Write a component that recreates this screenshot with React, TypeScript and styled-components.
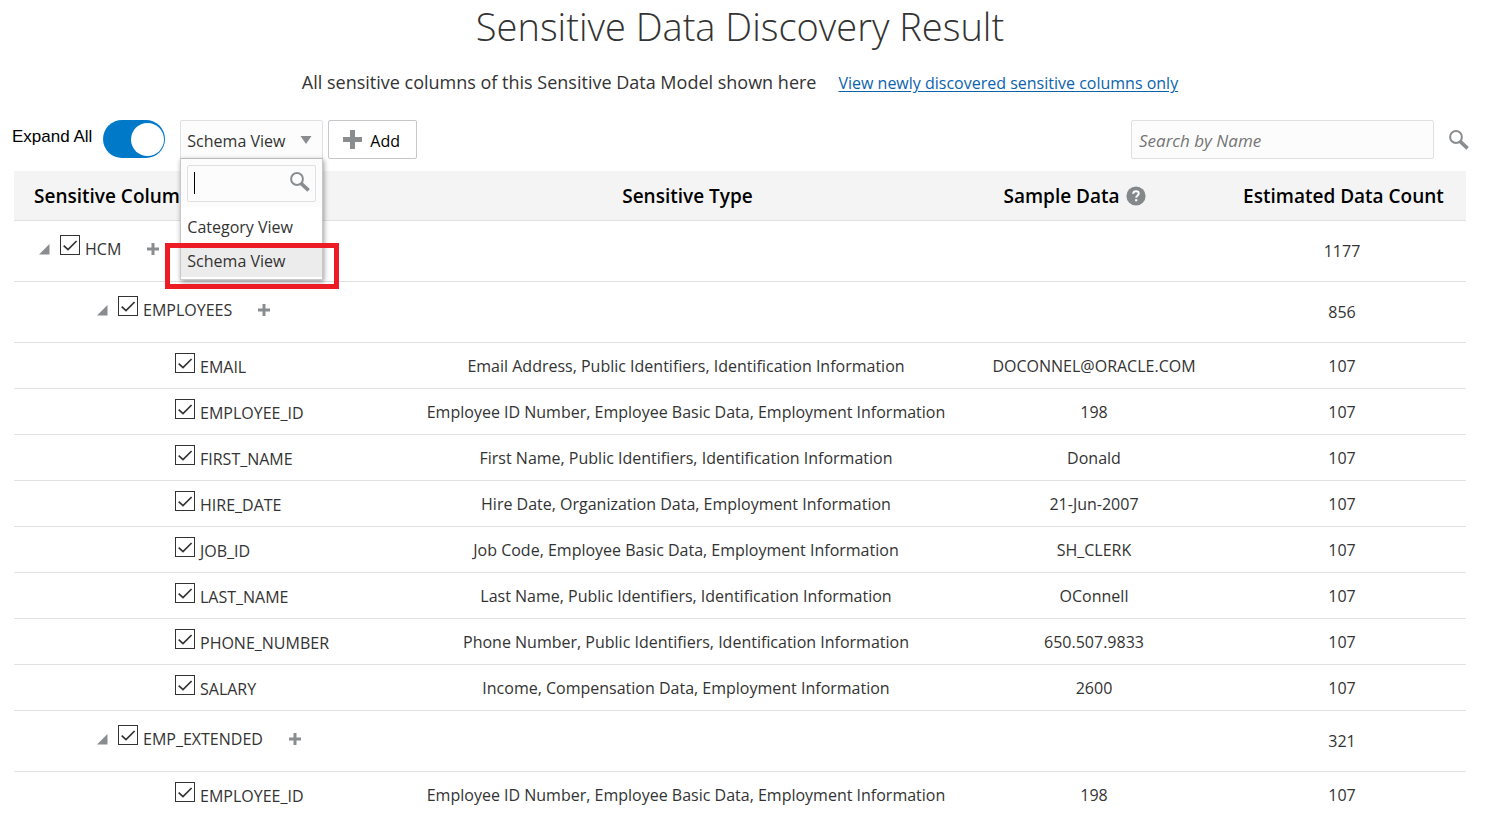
import React, { useState } from "react";
import styled, { createGlobalStyle } from "styled-components";

const GlobalStyle = createGlobalStyle`
  *, *::before, *::after { box-sizing: border-box; }
  body {
    margin: 0;
    background: #fff;
    color: #333;
    font-family: "Open Sans", sans-serif;
    font-size: 16px;
  }
  button, input, select { font-family: inherit; font-size: inherit; color: inherit; }
`;

const Page = styled.main`
  padding: 0 22px 0 14px;
`;

const Title = styled.h1`
  margin: 0;
  font-size: 38px;
  font-weight: 350;
  line-height: 52px;
  text-align: center;
`;

const Summary = styled.div`
  display: flex;
  justify-content: center;
  align-items: baseline;
  gap: 22px;
  padding-top: 18px;
  line-height: 24px;
`;

const SummaryText = styled.p`
  margin: 0;
  font-size: 18px;
`;

const SummaryLink = styled.a`
  color: #0b63ae;
  text-underline-offset: 2px;
`;

const Toolbar = styled.div`
  display: flex;
  align-items: flex-start;
  padding: 25px 0 12px;
  margin: 0 -3px 0 -2px;
`;

const ToggleLabel = styled.label`
  display: flex;
  align-items: flex-start;
  gap: 11px;
  margin-right: 15px;
  color: #000;
  font-family: "Liberation Sans", Arial, sans-serif;
  line-height: 34px;
  font-size: 17px;
`;

const Toggle = styled.input`
  appearance: none;
  display: flex;
  align-items: center;
  justify-content: flex-end;
  width: 62px;
  height: 38px;
  margin: 0;
  padding-right: 1px;
  border-radius: 19px;
  background: #007ac8;
  &:not(:checked) {
    justify-content: flex-start;
    padding: 0 0 0 1px;
    background: #999;
  }
  &::before {
    content: "";
    width: 33px;
    height: 33px;
    border-radius: 50%;
    background: #fff;
  }
`;

const ViewPicker = styled.div`
  position: relative;
  width: 143px;
  margin-right: 5px;
`;

const ViewField = styled.div`
  display: grid;
  align-items: center;
  > * { grid-area: 1 / 1; }
  > svg { justify-self: end; margin-right: 11px; pointer-events: none; }
`;

const ViewSelect = styled.select`
  appearance: none;
  width: 100%;
  height: 39px;
  padding: 2px 6px 0;
  border: 1px solid #dfe0e1;
  border-radius: 2px;
  background: #fcfcfc;
`;

const Popup = styled.div`
  position: absolute;
  z-index: 1;
  top: 38px;
  left: 0;
  width: 100%;
  height: 122px;
  border: 1px solid #c8c8c8;
  border-top-color: #bbb;
  background: #fff;
  box-shadow: 1px 2px 5px rgba(0, 0, 0, 0.4);
`;

const PopupSearch = styled.div`
  padding: 6px 6px 5px;
  background: #fcfcfc;
`;

const PopupSearchBox = styled.div`
  display: flex;
  align-items: center;
  height: 37px;
  padding: 0 5px 3px 6px;
  border: 1px solid #dfe0e1;
  border-radius: 2px;
`;

const Caret = styled.span`
  width: 1px;
  height: 22px;
  margin-top: 2px;
  background: #000;
`;

const PopupInput = styled.input`
  flex: 1;
  min-width: 0;
  padding: 0;
  border: 0;
  outline: 0;
  background: transparent;
`;

const Options = styled.ul`
  margin: 0;
  padding: 2px 0 0;
  list-style: none;
`;

const Option = styled.li<{ $active?: boolean }>`
  height: 34px;
  padding: 1px 6px 0;
  line-height: 34px;
  background: ${(p) => (p.$active ? "#ececec" : "transparent")};
`;

const Highlight = styled.div`
  position: absolute;
  z-index: 2;
  top: 123px;
  left: -15px;
  width: 174px;
  height: 46px;
  border: 5px solid #ed1c24;
  pointer-events: none;
`;

const AddButton = styled.button`
  display: flex;
  align-items: center;
  gap: 8px;
  width: 89px;
  height: 39px;
  padding: 0 0 0 14px;
  border: 1px solid #c4c8cb;
  border-radius: 2px;
  background: #fff;
  color: #000;
  span { padding-top: 3px; }
`;

const Search = styled.form`
  display: flex;
  align-items: center;
  gap: 15px;
  margin-left: auto;
`;

const SearchInput = styled.input`
  width: 303px;
  height: 39px;
  padding: 2px 7px 0;
  border: 1px solid #dfe0e1;
  border-radius: 2px;
  background: #fcfcfc;
  &::placeholder { color: #757575; font-size: 17px; font-style: italic; font-weight: 400; opacity: 1; }
`;

const IconButton = styled.button`
  display: flex;
  padding: 0;
  border: 0;
  background: none;
`;

const Table = styled.table`
  width: 100%;
  border-collapse: separate;
  border-spacing: 0;
  table-layout: fixed;
`;

const NameCol = styled.col` width: 388px; `;
const DataCol = styled.col` width: 248px; `;

const HeadCell = styled.th<{ $left?: boolean }>`
  height: 50px;
  padding: ${(p) => (p.$left ? "1px 20px 0" : "1px 0 0 3px")};
  border-bottom: 1px solid #e0e1e2;
  background: #f4f4f4;
  color: #000;
  font-size: 19px;
  font-weight: 600;
  text-align: ${(p) => (p.$left ? "left" : "center")};
`;

const HeadWithHelp = styled.span`
  display: flex;
  align-items: center;
  justify-content: center;
  gap: 6px;
  margin-right: 42px;
`;

const Row = styled.tr<{ $group: boolean }>`
  height: ${(p) => (p.$group ? 61 : 46)}px;
`;

const Cell = styled.td`
  padding: 0;
  border-bottom: 1px solid #dfe1e2;
  text-align: center;
`;

const NameCell = styled.th`
  padding: 0;
  border-bottom: 1px solid #dfe1e2;
  font-weight: 400;
  text-align: left;
  vertical-align: top;
`;

const indents = [24, 82, 161];

const NameLine = styled.div<{ $level: number }>`
  display: flex;
  align-items: flex-start;
  padding-top: ${(p) => (p.$level === 2 ? 10 : 14)}px;
  padding-left: ${(p) => indents[p.$level]}px;
  line-height: 28px;
`;

const Disclosure = styled(IconButton)`
  width: 22px;
  padding: 9px 0 0 1px;
`;

const AddColumn = styled(IconButton)`
  height: 28px;
  align-items: center;
  margin-left: 26px;
`;

const CheckLabel = styled.label`
  display: flex;
  gap: 5px;
`;

const CheckBox = styled.span`
  display: grid;
  width: 20px;
  height: 20px;
  > * { grid-area: 1 / 1; }
  > svg { pointer-events: none; }
  > input:not(:checked) + svg { visibility: hidden; }
`;

const Check = styled.input`
  appearance: none;
  width: 20px;
  height: 20px;
  margin: 0;
  border: 1px solid #333;
  background: #fff;
`;

const SearchIcon = () => (
  <svg width="20" height="20" viewBox="0 0 20 20" fill="none" stroke="#8a8d90" aria-hidden="true">
    <circle cx="7" cy="7" r="5.9" strokeWidth="2" />
    <path d="M10.8 11.2 18.6 18.3" strokeWidth="3.6" />
  </svg>
);

const PlusIcon = ({ size, weight }: { size: number; weight: number }) => (
  <svg width={size} height={size} viewBox={`0 0 ${size} ${size}`} stroke="#8a8d90" strokeWidth={weight} aria-hidden="true">
    <path d={`M0 ${size / 2}H${size}M${size / 2} 0V${size}`} />
  </svg>
);

const HelpIcon = () => (
  <svg width="20" height="20" viewBox="0 0 20 20" fill="none" aria-hidden="true">
    <circle cx="10" cy="10" r="9.6" fill="#85888b" />
    <path d="M7.2 7.7C7.3 6.1 8.4 5.3 10 5.3s2.8.9 2.8 2.3c0 1.9-2.6 2-2.6 4.2" stroke="#fff" strokeWidth="2" />
    <path d="M9.1 13.2h2.2v2.1H9.1z" fill="#fff" />
  </svg>
);

type Item = { level: number; name: string; type?: string; sample?: string; count: string };

const items: Item[] = [
  { level: 0, name: "HCM", count: "1177" },
  { level: 1, name: "EMPLOYEES", count: "856" },
  { level: 2, name: "EMAIL", type: "Email Address, Public Identifiers, Identification Information", sample: "DOCONNEL@ORACLE.COM", count: "107" },
  { level: 2, name: "EMPLOYEE_ID", type: "Employee ID Number, Employee Basic Data, Employment Information", sample: "198", count: "107" },
  { level: 2, name: "FIRST_NAME", type: "First Name, Public Identifiers, Identification Information", sample: "Donald", count: "107" },
  { level: 2, name: "HIRE_DATE", type: "Hire Date, Organization Data, Employment Information", sample: "21-Jun-2007", count: "107" },
  { level: 2, name: "JOB_ID", type: "Job Code, Employee Basic Data, Employment Information", sample: "SH_CLERK", count: "107" },
  { level: 2, name: "LAST_NAME", type: "Last Name, Public Identifiers, Identification Information", sample: "OConnell", count: "107" },
  { level: 2, name: "PHONE_NUMBER", type: "Phone Number, Public Identifiers, Identification Information", sample: "650.507.9833", count: "107" },
  { level: 2, name: "SALARY", type: "Income, Compensation Data, Employment Information", sample: "2600", count: "107" },
  { level: 1, name: "EMP_EXTENDED", count: "321" },
  { level: 2, name: "EMPLOYEE_ID", type: "Employee ID Number, Employee Basic Data, Employment Information", sample: "198", count: "107" },
];

const DataRow = ({ item }: { item: Item }) => {
  const group = item.level < 2;
  return (
    <Row $group={group}>
      <NameCell scope="row">
        <NameLine $level={item.level}>
          {group && (
            <Disclosure type="button" aria-label={`Collapse ${item.name}`} aria-expanded="true">
              <svg width="11" height="11" viewBox="0 0 11 11" fill="#8a8d90" aria-hidden="true">
                <path d="M10.5 0v10.5H0z" />
              </svg>
            </Disclosure>
          )}
          <CheckLabel>
            <CheckBox>
              <Check type="checkbox" defaultChecked />
              <svg width="20" height="20" viewBox="0 0 20 20" fill="none" stroke="#333" strokeWidth="1.7" aria-hidden="true">
                <path d="M3.7 10.6 8 14.6 16.6 6" />
              </svg>
            </CheckBox>
            {item.name}
          </CheckLabel>
          {group && (
            <AddColumn type="button" aria-label={`Add to ${item.name}`}>
              <PlusIcon size={12} weight={3} />
            </AddColumn>
          )}
        </NameLine>
      </NameCell>
      <Cell>{item.type}</Cell>
      <Cell>{item.sample}</Cell>
      <Cell>{item.count}</Cell>
    </Row>
  );
};

export default function App() {
  const [view, setView] = useState("Schema View");
  const views = ["Category View", "Schema View"];

  return (
    <Page>
      <GlobalStyle />
      <Title>Sensitive Data Discovery Result</Title>
      <Summary>
        <SummaryText>All sensitive columns of this Sensitive Data Model shown here</SummaryText>
        <SummaryLink href="#new">View newly discovered sensitive columns only</SummaryLink>
      </Summary>

      <Toolbar>
        <ToggleLabel>
          Expand All
          <Toggle type="checkbox" role="switch" defaultChecked />
        </ToggleLabel>
        <ViewPicker>
          <ViewField>
            <ViewSelect aria-label="View" value={view} onChange={(e) => setView(e.target.value)}>
              {views.map((v) => (
                <option key={v}>{v}</option>
              ))}
            </ViewSelect>
            <svg width="12" height="9" viewBox="0 0 12 9" fill="#8a8d90" aria-hidden="true">
              <path d="M.5 1h11L6 9z" />
            </svg>
          </ViewField>
          <Popup>
            <PopupSearch>
              <PopupSearchBox>
                <Caret />
                <PopupInput type="text" aria-label="Filter views" />
                <SearchIcon />
              </PopupSearchBox>
            </PopupSearch>
            <Options role="listbox" aria-label="Views">
              {views.map((v) => (
                <Option key={v} role="option" aria-selected={v === view} $active={v === view} onClick={() => setView(v)}>
                  {v}
                </Option>
              ))}
            </Options>
          </Popup>
          <Highlight />
        </ViewPicker>
        <AddButton type="button">
          <PlusIcon size={19} weight={5} />
          <span>Add</span>
        </AddButton>
        <Search onSubmit={(e) => e.preventDefault()}>
          <SearchInput type="text" aria-label="Search by Name" placeholder="Search by Name" />
          <IconButton type="submit" aria-label="Search">
            <SearchIcon />
          </IconButton>
        </Search>
      </Toolbar>

      <Table>
        <colgroup>
          <NameCol />
          <col />
          <DataCol />
          <DataCol />
        </colgroup>
        <thead>
          <tr>
            <HeadCell $left scope="col">Sensitive Column</HeadCell>
            <HeadCell scope="col">Sensitive Type</HeadCell>
            <HeadCell scope="col">
              <HeadWithHelp>
                Sample Data
                <HelpIcon />
              </HeadWithHelp>
            </HeadCell>
            <HeadCell scope="col">Estimated Data Count</HeadCell>
          </tr>
        </thead>
        <tbody>
          {items.map((item, i) => (
            <DataRow key={i} item={item} />
          ))}
        </tbody>
      </Table>
    </Page>
  );
}
